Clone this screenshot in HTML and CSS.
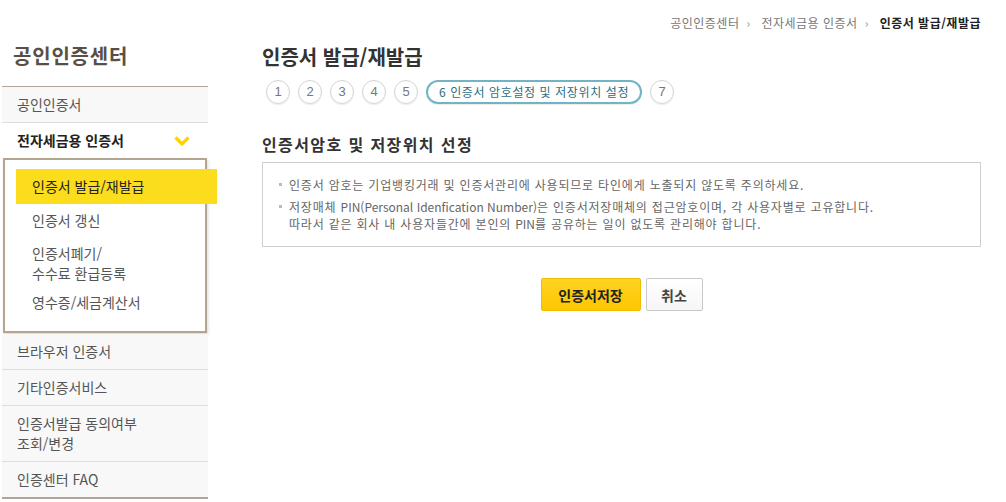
FILE: index.html
```html
<!DOCTYPE html>
<html lang="ko">
<head>
    <meta charset="UTF-8" />
    <title>인증서 발급/재발급 - 공인인증센터</title>
    <link rel="stylesheet" href="styles.css">
</head>
<body>
    <div class="wrap">
        <aside class="side">
            <h2 class="side-title">공인인증센터</h2>
            <ul class="menu">
                <li class="menu-item">공인인증서</li>
                <li class="menu-item open">
                    <span>전자세금용 인증서</span>
                    <svg class="chev" width="16" height="10" viewBox="0 0 16 10"><path d="M1.5 1.5 L8 8 L14.5 1.5" fill="none" stroke="#ffd200" stroke-width="3.2"/></svg>
                </li>
                <li class="sub">
                    <ul>
                        <li class="sub-item active">인증서 발급/재발급</li>
                        <li class="sub-item">인증서 갱신</li>
                        <li class="sub-item two-line">인증서폐기/<br>수수료 환급등록</li>
                        <li class="sub-item">영수증/세금계산서</li>
                    </ul>
                </li>
                <li class="menu-item">브라우저 인증서</li>
                <li class="menu-item">기타인증서비스</li>
                <li class="menu-item">인증서발급 동의여부<br>조회/변경</li>
                <li class="menu-item">인증센터 FAQ</li>
            </ul>
        </aside>

        <main class="content">
            <div class="crumb">
                <span>공인인증센터</span><i>›</i>
                <span>전자세금용 인증서</span><i>›</i>
                <strong>인증서 발급/재발급</strong>
            </div>
            <h1 class="page-title">인증서 발급/재발급</h1>
            <ol class="steps">
                <li>1</li>
                <li>2</li>
                <li>3</li>
                <li>4</li>
                <li>5</li>
                <li class="current">6 인증서 암호설정 및 저장위치 설정</li>
                <li>7</li>
            </ol>

            <h3 class="sec-title">인증서암호 및 저장위치 선정</h3>
            <div class="notice">
                <p>인증서 암호는 기업뱅킹거래 및 인증서관리에 사용되므로 타인에게 노출되지 않도록 주의하세요.</p>
                <p>저장매체 <span class="en">PIN(Personal Idenfication Number)</span>은 인증서저장매체의 접근암호이며, 각 사용자별로 고유합니다.<br>따라서 같은 회사 내 사용자들간에 본인의 <span class="en">PIN</span>를 공유하는 일이 없도록 관리해야 합니다.</p>
            </div>

            <div class="btns">
                <button class="btn btn-save">인증서저장</button>
                <button class="btn btn-cancel">취소</button>
            </div>
        </main>
    </div>
</body>
</html>
```

FILE: styles.css
```css
body {
    margin: 0;
    font-family: "Noto Sans CJK KR", "Noto Sans", sans-serif;
    color: #333;
    background: #fff;
}
ul, ol {
    list-style: none;
    margin: 0;
    padding: 0;
}
.wrap {
    display: flex;
    padding-left: 2px;
}

/* 왼쪽 메뉴 */
.side {
    width: 206px;
    flex-shrink: 0;
}
.side-title {
    margin: 0;
    padding: 42px 0 0 11px;
    height: 44px;
    font-size: 20px;
    line-height: 28px;
    font-weight: bold;
    color: #5b4f45;
    letter-spacing: 0.8px;
}
.menu {
    border-top: 1px solid #b3a696;
    border-bottom: 2px solid #b3a696;
}
.menu-item {
    background: #f8f8f8;
    border-bottom: 1px solid #dedede;
    padding: 7px 15px 8px;
    font-size: 14px;
    line-height: 20px;
    color: #555;
}
.menu-item:last-child {
    border-bottom: none;
}
.menu-item.open {
    display: flex;
    justify-content: space-between;
    align-items: center;
    background: #fff;
    border-bottom: none;
    font-weight: bold;
    color: #222;
    padding-right: 18px;
}
.chev {
    margin-top: 1px;
}
.sub ul {
    margin: 0 1px 1px 1px;
    border: 2px solid #b5a590;
    background: #fff;
    box-shadow: 1px 2px 3px rgba(0, 0, 0, 0.15);
    padding: 9px 0 11px;
}
.sub-item {
    padding: 8px 14px 9px 16px;
    margin-left: 11px;
    font-size: 14px;
    line-height: 17px;
    color: #555;
}
.sub-item.two-line {
    padding-top: 5px;
    padding-bottom: 3px;
    line-height: 20px;
}
.sub-item.active {
    background: #fcdd1d;
    color: #222;
    margin-right: -12px;
    padding-top: 9px;
    padding-bottom: 9px;
}

/* 본문 */
.content {
    flex: 1;
    padding: 0 25px 0 54px;
}
.crumb {
    text-align: right;
    font-size: 12px;
    line-height: 16px;
    color: #777;
    padding-top: 15px;
    letter-spacing: 0.5px;
}
.crumb i {
    font-style: normal;
    font-size: 12px;
    color: #999;
    margin: 0 7px;
}
.crumb strong {
    color: #222;
}
.page-title {
    margin: 13px 0 0;
    font-size: 20px;
    line-height: 26px;
    color: #333;
}
.steps {
    display: flex;
    gap: 8px;
    margin: 10px 0 0 4px;
}
.steps li {
    width: 22px;
    height: 22px;
    border: 1px solid #d3d3d3;
    border-radius: 12px;
    font-family: "Liberation Sans", sans-serif;
    font-size: 13px;
    line-height: 22px;
    text-align: center;
    color: #777;
    box-shadow: 0 1px 1px rgba(0, 0, 0, 0.08);
}
.steps li.current {
    width: auto;
    height: 20px;
    padding: 0 11px;
    border: 2px solid #72b4c6;
    font-family: "Noto Sans CJK KR", sans-serif;
    font-size: 12px;
    line-height: 20px;
    color: #2d6d80;
    letter-spacing: 0.6px;
}
.sec-title {
    margin: 29px 0 0;
    font-size: 16px;
    line-height: 22px;
    color: #333;
    letter-spacing: 1.4px;
}
.notice {
    margin-top: 7px;
    border: 1px solid #cfcfcf;
    padding: 13px 16px 14px;
}
.notice p {
    margin: 0;
    padding-left: 10px;
    position: relative;
    font-size: 12px;
    line-height: 17px;
    color: #666;
    letter-spacing: 0.8px;
}
.notice p + p {
    margin-top: 5px;
}
.notice p::before {
    content: "";
    position: absolute;
    left: 0;
    top: 7px;
    width: 3px;
    height: 3px;
    background: #bbb;
}
.notice .en {
    letter-spacing: 0;
}
.btns {
    display: flex;
    justify-content: center;
    gap: 5px;
    margin-top: 31px;
}
.btn {
    height: 33px;
    font-family: "Noto Sans CJK KR", sans-serif;
    font-size: 14px;
    font-weight: bold;
    border-radius: 2px;
    cursor: pointer;
}
.btn-save {
    width: 100px;
    background: linear-gradient(to bottom, #ffd322, #fdc600);
    border: 1px solid #f0bb00;
    color: #222;
}
.btn-cancel {
    width: 57px;
    background: linear-gradient(to bottom, #fff, #f6f6f6);
    border: 1px solid #c9c9c9;
    color: #444;
}
```
